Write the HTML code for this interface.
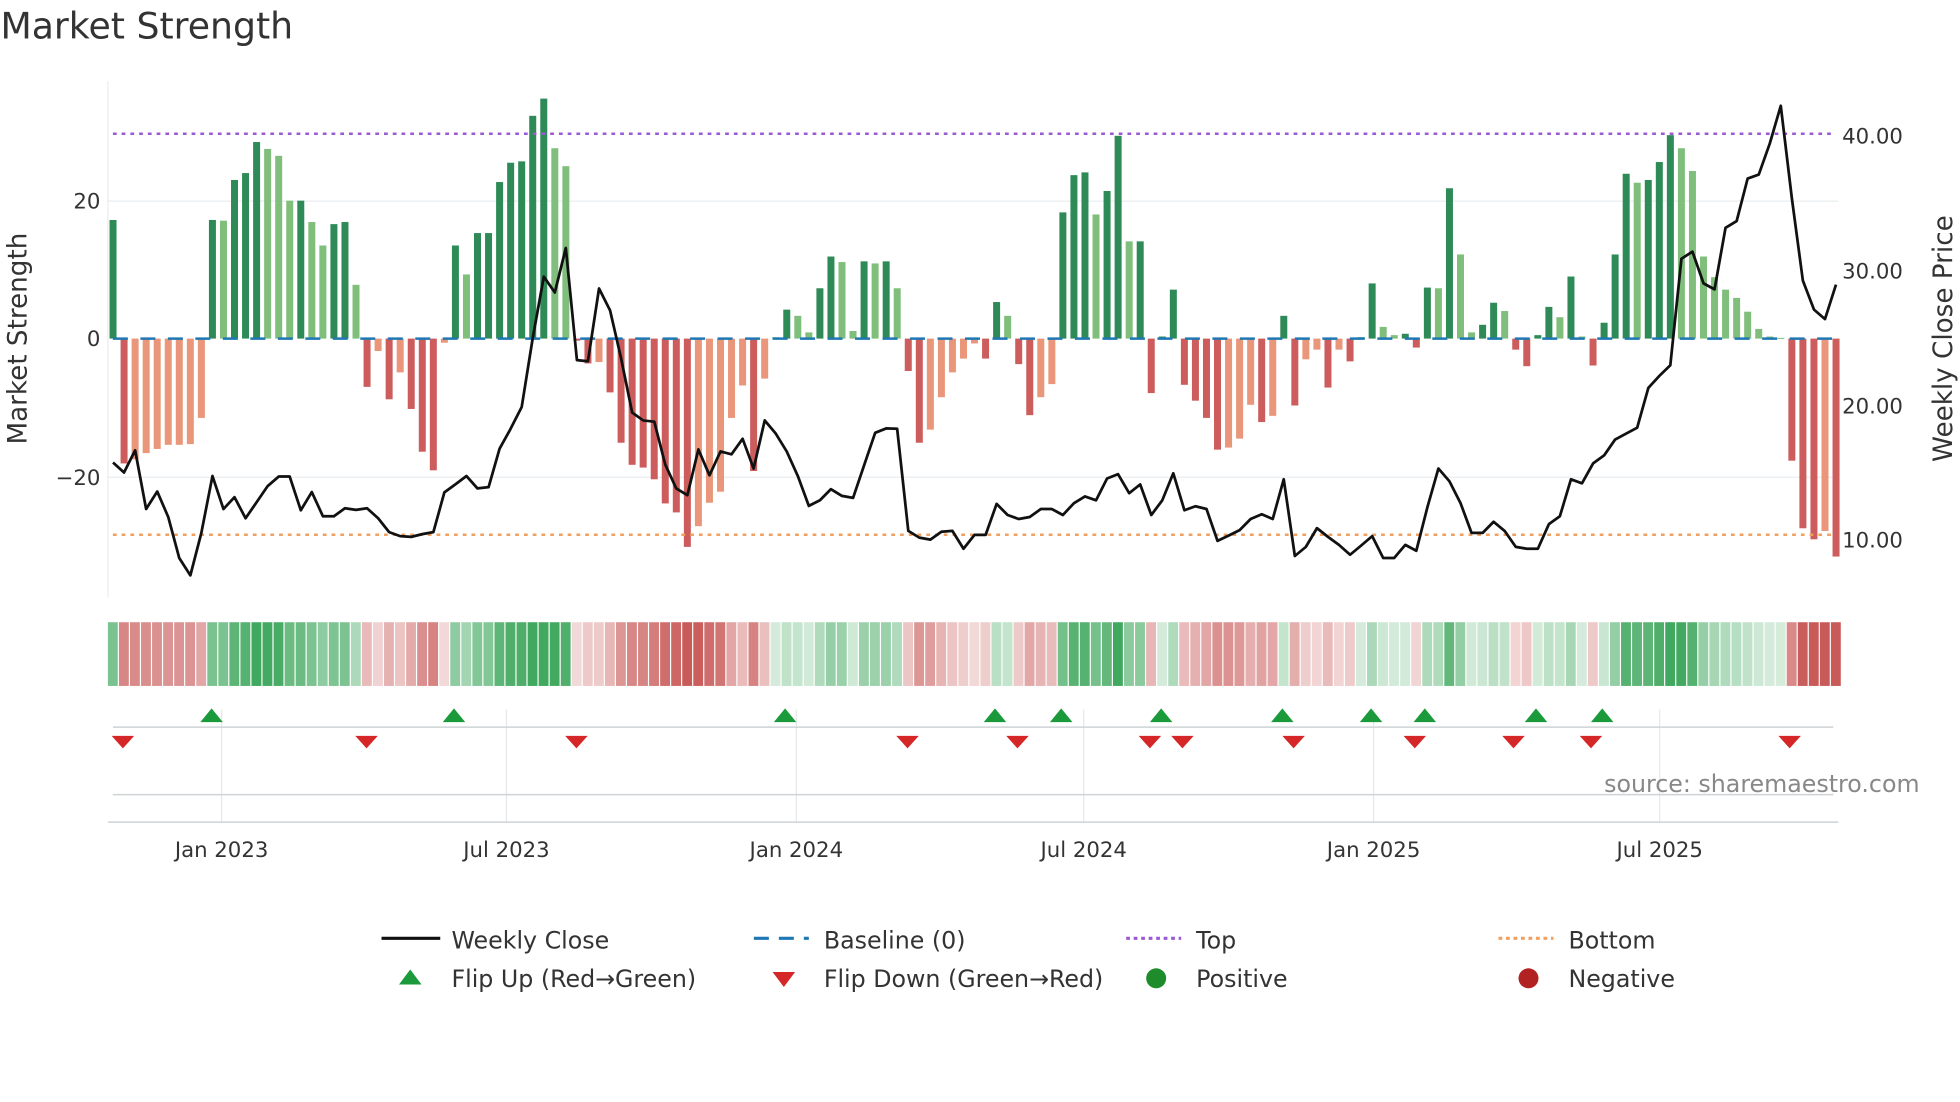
<!DOCTYPE html>
<html><head><meta charset="utf-8"><style>
html,body{margin:0;padding:0;background:#fff;}
svg{display:block;font-family:"DejaVu Sans","Liberation Sans",sans-serif;}
</style></head><body>
<svg id="s" width="1960" height="1102" viewBox="0 0 1568 882" xmlns="http://www.w3.org/2000/svg">
<rect width="1568" height="882" fill="#fff"/>
<text x="0" y="31" font-size="29" fill="#333">Market Strength</text>
<g stroke="#e9edf0" stroke-width="1">
<line x1="86" y1="161" x2="1471" y2="161"/>
<line x1="86" y1="382" x2="1471" y2="382"/>
<line x1="86" y1="65" x2="86" y2="478"/>
</g>
<g id="bars"></g>
<line x1="90" y1="271" x2="1468" y2="271" stroke="#1f77b4" stroke-width="2" stroke-dasharray="12,10"/>
<line x1="90" y1="107" x2="1468" y2="107" stroke="#9b59d6" stroke-width="2" stroke-dasharray="3,4"/>
<line x1="90" y1="428" x2="1468" y2="428" stroke="#f0a060" stroke-width="2" stroke-dasharray="3,4"/>
<polyline id="price" fill="none" stroke="#111" stroke-width="2.2" stroke-linejoin="round"/>
<g font-size="17" fill="#333">
<text x="80" y="167" text-anchor="end">20</text>
<text x="80" y="277" text-anchor="end">0</text>
<text x="80" y="388" text-anchor="end">−20</text>
<text x="1474" y="115">40.00</text>
<text x="1474" y="223">30.00</text>
<text x="1474" y="331">20.00</text>
<text x="1474" y="438">10.00</text>
</g>
<text transform="translate(21,271) rotate(-90)" text-anchor="middle" font-size="21" fill="#333">Market Strength</text>
<text transform="translate(1562,271) rotate(-90)" text-anchor="middle" font-size="21" fill="#333">Weekly Close Price</text>
<g id="strip"></g>
<g stroke="#e6e9ec" stroke-width="1">
<line x1="177" y1="568" x2="177" y2="658"/><line x1="405" y1="568" x2="405" y2="658"/>
<line x1="637" y1="568" x2="637" y2="658"/><line x1="867" y1="568" x2="867" y2="658"/>
<line x1="1099" y1="568" x2="1099" y2="658"/><line x1="1328" y1="568" x2="1328" y2="658"/>
</g>
<line x1="90" y1="582" x2="1467" y2="582" stroke="#cfd3d6" stroke-width="1.2"/>
<line x1="90" y1="636" x2="1467" y2="636" stroke="#cfd3d6" stroke-width="1.2"/>
<line x1="86" y1="658" x2="1471" y2="658" stroke="#cfd3d6" stroke-width="1.2"/>
<g id="marks"></g>
<text x="1536" y="634" text-anchor="end" font-size="19" fill="#888">source: sharemaestro.com</text>
<g font-size="17" fill="#333" text-anchor="middle">
<text x="177" y="686">Jan 2023</text><text x="405" y="686">Jul 2023</text>
<text x="637" y="686">Jan 2024</text><text x="867" y="686">Jul 2024</text>
<text x="1099" y="686">Jan 2025</text><text x="1328" y="686">Jul 2025</text>
</g>
<g font-size="19" fill="#333">
<line x1="305" y1="751" x2="352" y2="751" stroke="#111" stroke-width="2.5"/>
<text x="361" y="759">Weekly Close</text>
<line x1="603" y1="751" x2="647" y2="751" stroke="#1f77b4" stroke-width="2.5" stroke-dasharray="12,8"/>
<text x="659" y="759">Baseline (0)</text>
<line x1="901" y1="751" x2="945" y2="751" stroke="#9b59d6" stroke-width="2.5" stroke-dasharray="3,3"/>
<text x="957" y="759">Top</text>
<line x1="1199" y1="751" x2="1243" y2="751" stroke="#f0a060" stroke-width="2.5" stroke-dasharray="3,3"/>
<text x="1255" y="759">Bottom</text>
<polygon points="319,788 337,788 328,776" fill="#1a9a3a"/>
<text x="361" y="790">Flip Up (Red→Green)</text>
<polygon points="618,778 636,778 627,790" fill="#d62728"/>
<text x="659" y="790">Flip Down (Green→Red)</text>
<circle cx="925" cy="783" r="8" fill="#1e8c2a"/>
<text x="957" y="790">Positive</text>
<circle cx="1223" cy="783" r="8" fill="#b22222"/>
<text x="1255" y="790">Negative</text>
</g>
</svg>
<script>
var NS="http://www.w3.org/2000/svg";
function el(t,a,p){var e=document.createElementNS(NS,t);for(var k in a)e.setAttribute(k,a[k]);p.appendChild(e);return e;}
var B="17.2D -18.1R -17.5O -16.6O -16O -15.4O -15.4O -15.3O -11.5O 17.2D 17.1L 23D 24D 28.5D 27.5L 26.5L 20L 20D 16.9L 13.5L 16.6D 16.9D 7.8L -7R -1.8O -8.8R -4.9O -10.2R -16.4R -19.1R -0.6O 13.5D 9.3L 15.3D 15.3D 22.7D 25.5D 25.7D 32.3D 34.8D 27.6L 25L -0.3R -3.6R -3.4O -7.8R -15.1R -18.3R -18.7R -20.4R -23.9R -25.2R -30.2R -27.2O -23.8O -22.2O -11.5O -6.8O -19.2R -5.8O 0.2L 4.2D 3.3L 0.9L 7.3D 11.9D 11.1L 1.1L 11.2D 10.9L 11.2D 7.3L -4.7R -15.1R -13.2O -8.5O -4.9O -2.9O -0.7O -2.9R 5.3D 3.3L -3.7R -11.1R -8.5O -6.6O 18.3D 23.7D 24.1D 18L 21.4D 29.4D 14.1L 14.1D -7.9R 0.3D 7.1D -6.7R -9R -11.5R -16.1R -15.8O -14.5O -9.6O -12.1R -11.2O 3.3D -9.7R -3O -1.6O -7.1R -1.6O -3.3R 0.2D 8D 1.7L 0.5L 0.7D -1.3R 7.4D 7.3L 21.8D 12.2L 0.9L 2D 5.2D 4L -1.6R -4R 0.5D 4.6D 3.1L 9D 0.3L -3.9R 2.3D 12.2D 23.9D 22.6L 23D 25.6D 29.5D 27.6L 24.3L 11.9L 8.9L 7.1L 5.9L 3.9L 1.4L 0.3L 0.1L -17.7R -27.5R -29.1R -27.9O -31.6R".split(" ");
var col={D:"#2e8b57",L:"#7fbf7b",R:"#cd5c5c",O:"#e9967a"};
var g=document.getElementById("bars"),st=document.getElementById("strip");
for(var i=0;i<B.length;i++){
 var v=parseFloat(B[i]),t=B[i].slice(-1),x=90.1+8.84*i;
 var y0=271,y1=271-v*5.52;
 el("rect",{x:x-2.8,y:Math.min(y0,y1),width:5.6,height:Math.max(0.8,Math.abs(y1-y0)),fill:col[t]},g);
 var a=Math.min(1,0.22+Math.abs(v)/28*0.78);
 var c=v>=0?"rgba(65,168,95,"+a+")":"rgba(200,90,88,"+a+")";
 el("rect",{x:x-4.1,y:498,width:7.9,height:51,fill:c},st);
}
var P1=[963,988,932,1080,1036,1100,1203,1247,1140,997,1080,1050,1103,1063,1022,998,998,1083,1037,1098,1098,1078,1082,1078,1103,1138,1148,1150,1143,1138,1038,1018,997,1028,1025,928,878,823,650,495,535,423,705,708,525,580,700,837,857,860,968,1028,1045,930,995,935,942,903,978,857,890,935,997,1072,1058,1030,1047,1052,970,888,877,878,1135,1152,1157,1137,1135,1180,1145,1145,1067];
var P2=[1095,1105,1100,1080,1080,1095,1065,1048,1058,1003,992,1040,1018,1095,1058,990,1083,1073,1080,1160,1147,1133,1105,1093,1105,1005,1198,1175,1128,1150,1170,1195,1172,1148,1203,1203,1170,1185,1075,978,1010,1065,1140,1140,1112,1135,1175,1180,1180,1118,1098,1005,1015,965,945,905,890,875,775,745,718,450,432,512,527,372,355,248,238,160,65,298,505,578,602,515];
var P=P1.concat(P2),pts=[];
for(var i=0;i<P.length;i++){pts.push((90.1+8.84*i).toFixed(1)+","+(64+P[i]*0.318).toFixed(1));}
document.getElementById("price").setAttribute("points",pts.join(" "));
var m=document.getElementById("marks");
[169,363,628,796,849,929,1026,1097,1140,1229,1282].forEach(function(x){el("polygon",{points:(x-9)+",578 "+(x+9)+",578 "+x+",567",fill:"#1a9a3a"},m);});
[98,293,461,726,814,920,946,1035,1132,1211,1273,1432].forEach(function(x){el("polygon",{points:(x-9)+",589 "+(x+9)+",589 "+x+",599",fill:"#d62728"},m);});
</script>
</body></html>
